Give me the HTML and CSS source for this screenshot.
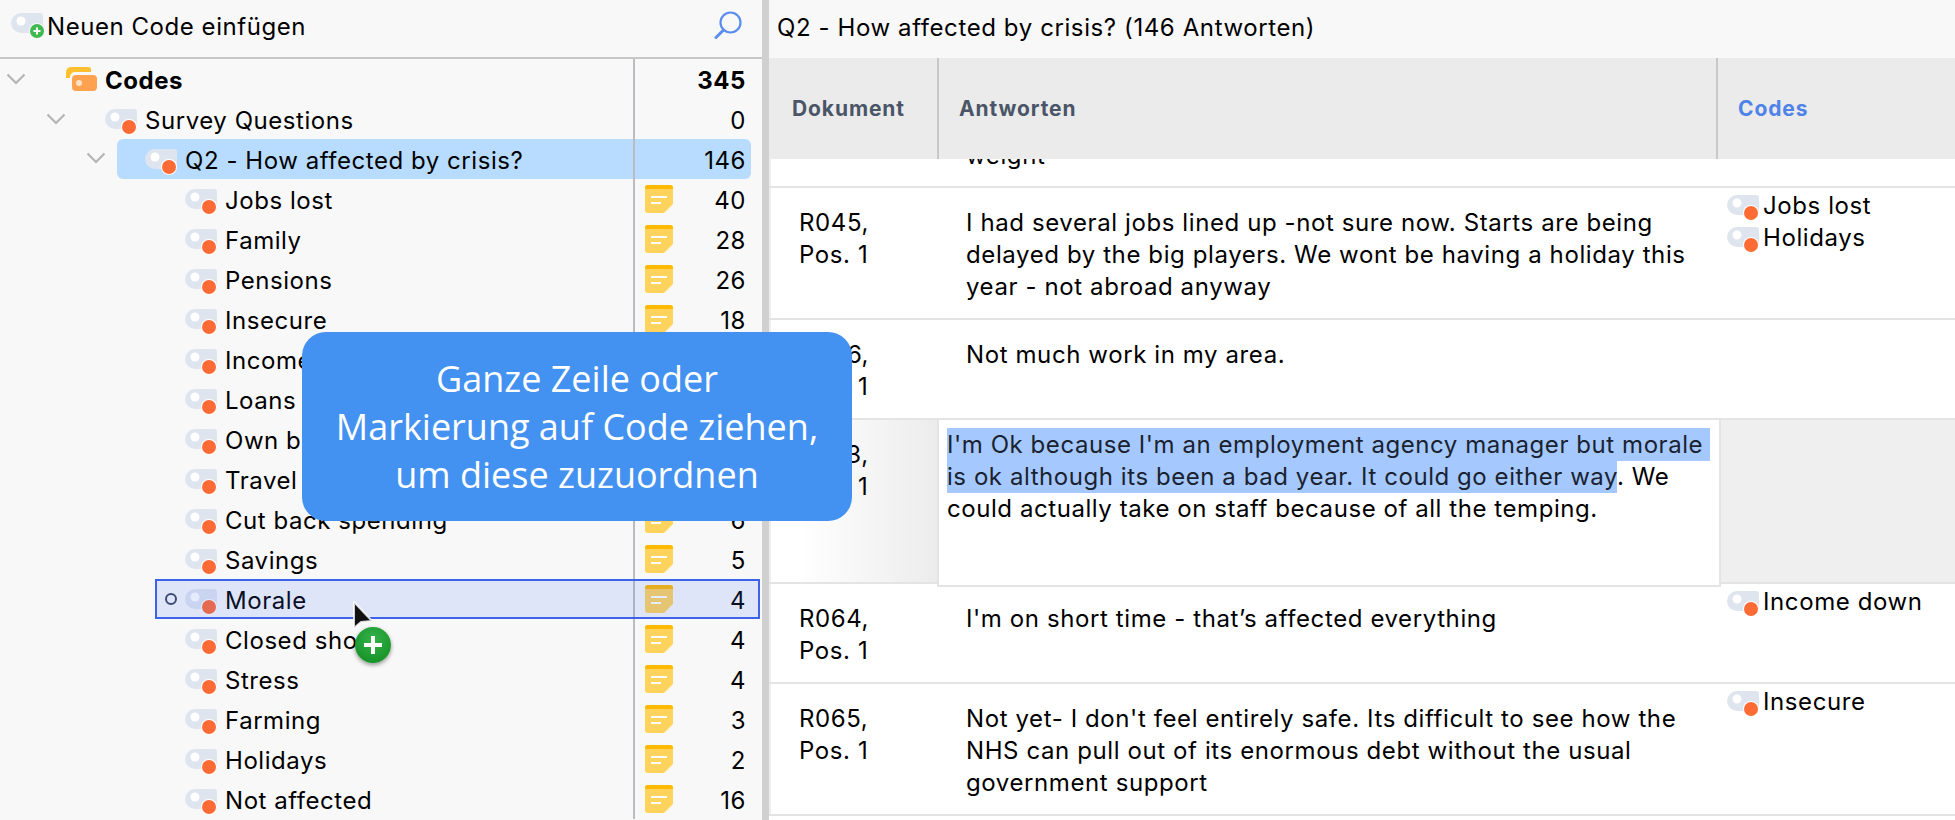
FILE: index.html
```html
<!DOCTYPE html>
<html lang="de">
  <head>
    <meta charset="UTF-8" />
    <title>Codes</title>
    <link rel="stylesheet" href="styles.css">
  </head>
  <body>
    <svg class="defs" width="0" height="0">
      <symbol id="tag" viewBox="0 0 32 32">
        <path d="M10 6h19a3 3 0 0 1 3 3v14a3 3 0 0 1-3 3H10a10 10 0 0 1 0-20z" fill="#dfe5ef" />
        <circle cx="10" cy="14" r="4.500" fill="#fff" />
        <circle cx="24" cy="24" r="8" fill="#fff" />
        <circle cx="24" cy="24" r="7" fill="#ff6b35" />
      </symbol>
      <symbol id="tag-plain" viewBox="0 0 32 32">
        <path d="M10 6h19a3 3 0 0 1 3 3v14a3 3 0 0 1-3 3H10a10 10 0 0 1 0-20z" fill="#dfe5ef" />
        <circle cx="10" cy="14" r="4.500" fill="#fff" />
      </symbol>
      <symbol id="memo" viewBox="0 0 28 28">
        <path d="M3 0h22a3 3 0 0 1 3 3v16l-9 9H3a3 3 0 0 1-3-3V3a3 3 0 0 1 3-3z" fill="#ffd35c" />
        <path d="M3 0h22a3 3 0 0 1 3 3v1H0V3a3 3 0 0 1 3-3z" fill="#ffb900" />
        <path d="M6 11h16v2H6zM6 17h10v2H6z" fill="#fff" />
      </symbol>
      <symbol id="chevron" viewBox="0 0 20 12">
        <path d="M1.500 1.500L10 10l8.500-8.500" fill="none" stroke="#b4b4b4" stroke-width="2.200" />
      </symbol>
    </svg>

    <div class="app">
      <div class="left-panel">
        <div class="toolbar">
          <span class="new-code">
            <svg class="icon-tag" width="32" height="32"><use href="#tag-plain" /></svg>
            <span class="add-dot">
              <svg width="14" height="14" viewBox="0 0 14 14"><circle cx="7" cy="7" r="7" fill="#3fb950" /><path d="M7 3.500v7M3.500 7h7" stroke="#fff" stroke-width="2" /></svg>
            </span>
            Neuen Code einfügen
          </span>
          <svg class="search" width="32" height="30" viewBox="0 0 32 30">
            <circle cx="17.500" cy="13.500" r="10" fill="none" stroke="#5b8def" stroke-width="2.200" />
            <path d="M10.500 21L3 28.500" stroke="#5b8def" stroke-width="3" stroke-linecap="round" />
          </svg>
        </div>

        <div class="tree">
          <div class="row root">
            <svg class="chevron lvl0" width="20" height="12"><use href="#chevron" /></svg>
            <svg class="icon-root" width="33" height="26" viewBox="0 0 33 26">
              <path d="M1 12V6a5 5 0 0 1 5-5h17a3 3 0 0 1 3 3v2H10a5 5 0 0 0-5 5v1z" fill="#ffbf2e" />
              <rect x="7" y="9" width="25" height="16" rx="4" fill="#ffa24f" />
              <circle cx="14" cy="17" r="3" fill="#ffe3c9" />
            </svg>
            <span class="label">Codes</span>
            <span class="memo-col"></span>
            <span class="num">345</span>
          </div>
          <div class="row">
            <svg class="chevron lvl1" width="20" height="12"><use href="#chevron" /></svg>
            <svg class="icon-tag" width="32" height="32"><use href="#tag" /></svg>
            <span class="label">Survey Questions</span>
            <span class="memo-col"></span>
            <span class="num">0</span>
          </div>
          <div class="row selected">
            <svg class="chevron lvl2" width="20" height="12"><use href="#chevron" /></svg>
            <svg class="icon-tag" width="32" height="32"><use href="#tag" /></svg>
            <span class="label">Q2 - How affected by crisis?</span>
            <span class="memo-col"></span>
            <span class="num">146</span>
          </div>
          <div class="row child">
            <svg class="icon-tag" width="32" height="32"><use href="#tag" /></svg>
            <span class="label">Jobs lost</span>
            <span class="memo-col"><svg width="28" height="28"><use href="#memo" /></svg></span>
            <span class="num">40</span>
          </div>
          <div class="row child">
            <svg class="icon-tag" width="32" height="32"><use href="#tag" /></svg>
            <span class="label">Family</span>
            <span class="memo-col"><svg width="28" height="28"><use href="#memo" /></svg></span>
            <span class="num">28</span>
          </div>
          <div class="row child">
            <svg class="icon-tag" width="32" height="32"><use href="#tag" /></svg>
            <span class="label">Pensions</span>
            <span class="memo-col"><svg width="28" height="28"><use href="#memo" /></svg></span>
            <span class="num">26</span>
          </div>
          <div class="row child">
            <svg class="icon-tag" width="32" height="32"><use href="#tag" /></svg>
            <span class="label">Insecure</span>
            <span class="memo-col"><svg width="28" height="28"><use href="#memo" /></svg></span>
            <span class="num">18</span>
          </div>
          <div class="row child">
            <svg class="icon-tag" width="32" height="32"><use href="#tag" /></svg>
            <span class="label">Income down</span>
            <span class="memo-col"><svg width="28" height="28"><use href="#memo" /></svg></span>
            <span class="num">12</span>
          </div>
          <div class="row child">
            <svg class="icon-tag" width="32" height="32"><use href="#tag" /></svg>
            <span class="label">Loans</span>
            <span class="memo-col"><svg width="28" height="28"><use href="#memo" /></svg></span>
            <span class="num">9</span>
          </div>
          <div class="row child">
            <svg class="icon-tag" width="32" height="32"><use href="#tag" /></svg>
            <span class="label">Own business</span>
            <span class="memo-col"><svg width="28" height="28"><use href="#memo" /></svg></span>
            <span class="num">8</span>
          </div>
          <div class="row child">
            <svg class="icon-tag" width="32" height="32"><use href="#tag" /></svg>
            <span class="label">Travel</span>
            <span class="memo-col"><svg width="28" height="28"><use href="#memo" /></svg></span>
            <span class="num">7</span>
          </div>
          <div class="row child">
            <svg class="icon-tag" width="32" height="32"><use href="#tag" /></svg>
            <span class="label">Cut back spending</span>
            <span class="memo-col"><svg width="28" height="28"><use href="#memo" /></svg></span>
            <span class="num">6</span>
          </div>
          <div class="row child">
            <svg class="icon-tag" width="32" height="32"><use href="#tag" /></svg>
            <span class="label">Savings</span>
            <span class="memo-col"><svg width="28" height="28"><use href="#memo" /></svg></span>
            <span class="num">5</span>
          </div>
          <div class="row child drop">
            <span class="ring"></span>
            <svg class="icon-tag" width="32" height="32"><use href="#tag" /></svg>
            <span class="label">Morale</span>
            <span class="memo-col"><svg width="28" height="28"><use href="#memo" /></svg></span>
            <span class="num">4</span>
          </div>
          <div class="row child">
            <svg class="icon-tag" width="32" height="32"><use href="#tag" /></svg>
            <span class="label">Closed shops</span>
            <span class="memo-col"><svg width="28" height="28"><use href="#memo" /></svg></span>
            <span class="num">4</span>
          </div>
          <div class="row child">
            <svg class="icon-tag" width="32" height="32"><use href="#tag" /></svg>
            <span class="label">Stress</span>
            <span class="memo-col"><svg width="28" height="28"><use href="#memo" /></svg></span>
            <span class="num">4</span>
          </div>
          <div class="row child">
            <svg class="icon-tag" width="32" height="32"><use href="#tag" /></svg>
            <span class="label">Farming</span>
            <span class="memo-col"><svg width="28" height="28"><use href="#memo" /></svg></span>
            <span class="num">3</span>
          </div>
          <div class="row child">
            <svg class="icon-tag" width="32" height="32"><use href="#tag" /></svg>
            <span class="label">Holidays</span>
            <span class="memo-col"><svg width="28" height="28"><use href="#memo" /></svg></span>
            <span class="num">2</span>
          </div>
          <div class="row child">
            <svg class="icon-tag" width="32" height="32"><use href="#tag" /></svg>
            <span class="label">Not affected</span>
            <span class="memo-col"><svg width="28" height="28"><use href="#memo" /></svg></span>
            <span class="num">16</span>
          </div>
        </div>
      </div>

      <div class="right-panel">
        <div class="title-bar">Q2 - How affected by crisis? (146 Antworten)</div>
        <div class="table-head">
          <div class="col-doc">Dokument</div>
          <div class="col-text">Antworten</div>
          <div class="col-codes active">Codes</div>
        </div>
        <div class="table-row cut">
          <div class="col-doc"></div>
          <div class="col-text">weight</div>
          <div class="col-codes"></div>
        </div>
        <div class="table-row tall">
          <div class="col-doc">R045,<br>Pos. 1</div>
          <div class="col-text">I had several jobs lined up -not sure now. Starts are being delayed by the big players. We wont be having a holiday this year - not abroad anyway</div>
          <div class="col-codes">
            <div class="code"><svg class="icon-tag" width="32" height="32"><use href="#tag" /></svg>Jobs lost</div>
            <div class="code"><svg class="icon-tag" width="32" height="32"><use href="#tag" /></svg>Holidays</div>
          </div>
        </div>
        <div class="table-row short">
          <div class="col-doc">R046,<br>Pos. 1</div>
          <div class="col-text">Not much work in my area.</div>
          <div class="col-codes"></div>
        </div>
        <div class="table-row editing">
          <div class="col-doc">R063,<br>Pos. 1</div>
          <div class="col-text"><mark>I'm Ok because I'm an employment agency manager but morale is ok although its been a bad year. It could go either way</mark>. We could actually take on staff because of all the temping.</div>
          <div class="col-codes"></div>
        </div>
        <div class="table-row short">
          <div class="col-doc">R064,<br>Pos. 1</div>
          <div class="col-text">I'm on short time - that’s affected everything</div>
          <div class="col-codes">
            <div class="code"><svg class="icon-tag" width="32" height="32"><use href="#tag" /></svg>Income down</div>
          </div>
        </div>
        <div class="table-row tall">
          <div class="col-doc">R065,<br>Pos. 1</div>
          <div class="col-text">Not yet- I don't feel entirely safe. Its difficult to see how the NHS can pull out of its enormous debt without the usual government support</div>
          <div class="col-codes">
            <div class="code"><svg class="icon-tag" width="32" height="32"><use href="#tag" /></svg>Insecure</div>
          </div>
        </div>
      </div>
    </div>

    <div class="hint">Ganze Zeile oder<br>Markierung auf Code ziehen,<br>um diese zuzuordnen</div>

    <svg class="pointer" width="24" height="36" viewBox="0 0 24 36">
      <path d="M2 2v26l7-6 11-1z" fill="#111" stroke="rgba(255,255,255,0.8)" stroke-width="2" stroke-linejoin="round" />
    </svg>
    <span class="copy-badge"></span>
  </body>
</html>
```

FILE: styles.css
```css
* {
  box-sizing: border-box;
}

html,
body {
  height: 100%;
}

body {
  margin: 0;
  overflow: hidden;
  background-color: #fff;
  color: #000;
  font-family: "Inter", "Liberation Sans", sans-serif;
  font-size: 24px;
  letter-spacing: 0.55px;
  position: relative;
}

.defs {
  position: absolute;
}

.app {
  display: flex;
  height: 820px;
}

svg {
  flex-shrink: 0;
  display: block;
}

/* Left panel */
.left-panel {
  width: 762px;
  background-color: #f8f8f8;
  overflow: hidden;
}

.toolbar {
  height: 59px;
  border-bottom: 2px solid #c8c8c8;
  display: flex;
  align-items: center;
  justify-content: space-between;
  padding: 0 17px 4px 11px;
}

.new-code {
  display: flex;
  align-items: center;
  position: relative;
}

.new-code .icon-tag {
  margin: -7px 4px 0 0;
}

.add-dot {
  position: absolute;
  left: 18px;
  top: 11px;
  width: 16px;
  height: 16px;
  background: #f8f8f8;
  border-radius: 50%;
  padding: 1px;
}

.search {
  align-self: flex-start;
  margin-top: 9px;
}

.row {
  height: 40px;
  display: flex;
  align-items: center;
  position: relative;
  padding: 2px 16px 0 0;
}

.row .icon-tag {
  margin-right: 8px;
  margin-top: -2px;
}

.row.root {
  font-weight: 700;
}

.root .icon-root {
  margin: -2px 7px 0 39px;
}

.chevron {
  margin-top: -2px;
}

.chevron.lvl0 {
  margin-left: 6px;
}

.chevron.lvl1 {
  margin: -2px 39px 0 46px;
}

.row.selected {
  margin: 0 11px 0 117px;
  padding-left: 28px;
  padding-right: 5px;
  background-color: #b8dcff;
  border-radius: 6px;
}

.chevron.lvl2 {
  position: absolute;
  left: -31px;
  top: 13px;
  margin: 0;
}

.row.child {
  padding-left: 185px;
}

.label {
  flex: 1;
  white-space: nowrap;
  overflow: hidden;
}

.memo-col {
  width: 113px;
  margin-top: -2px;
  align-self: stretch;
  height: 40px;
  flex-shrink: 0;
  display: flex;
  align-items: center;
  padding-left: 10px;
  border-left: 2px solid #bcbcc0;
}

.num {
  width: 0;
  flex: 0 0 0;
  display: flex;
  justify-content: flex-end;
}

.row.drop {
  margin: 0 2px 0 155px;
  padding-left: 30px;
  padding-right: 14px;
}

/* blue tint of the drop target lies over the icons as well */
.row.drop::after {
  content: "";
  position: absolute;
  inset: 0;
  background-color: rgba(70, 110, 245, 0.14);
  border: 2px solid #3d63e8;
}

.drop .ring {
  position: absolute;
  left: 10px;
  top: 14px;
  width: 12px;
  height: 12px;
  border: 2px solid #3b4660;
  border-radius: 50%;
}

/* Right panel */
.right-panel {
  flex: 1;
  border-left: 7px solid #d0d0d0;
  overflow: hidden;
  letter-spacing: 0.6px;
}

.title-bar {
  height: 58px;
  background-color: #f8f8f8;
  display: flex;
  align-items: center;
  padding: 0 0 4px 8px;
  white-space: nowrap;
}

.table-head {
  display: flex;
  height: 101px;
  background-color: #ebebeb;
  font-size: 21px;
  font-weight: 700;
  color: #4a5568;
  letter-spacing: 0.9px;
}

.table-head > div {
  display: flex;
  align-items: center;
  padding-left: 20px;
}

.table-head .col-doc {
  padding-left: 23px;
}

.table-head .col-text,
.table-head .col-codes {
  border-left: 2px solid #c8c8c8;
}

.table-head .active {
  color: #4f83e8;
}

.col-doc {
  width: 168px;
  flex-shrink: 0;
}

.col-text {
  width: 779px;
  flex-shrink: 0;
}

.col-codes {
  flex: 1;
}

.table-row {
  display: flex;
  border-bottom: 2px solid #e4e4e4;
  box-shadow: inset 2px 0 0 #eee;
  line-height: 32px;
}

.table-row .col-doc {
  padding: 19px 0 0 30px;
}

.table-row .col-text {
  padding: 19px 28px 0 29px;
}

.table-row .col-codes {
  padding: 2px 0 0 11px;
}

.table-row.cut {
  height: 29px;
  overflow: hidden;
}

.table-row.cut .col-text {
  padding-top: 0;
  margin-top: -19px;
}

.table-row.tall {
  height: 132px;
}

.table-row.short {
  height: 100px;
}

.table-row.editing {
  height: 164px;
  background: linear-gradient(to right, #fff 0, #fff 30px, #ececec 168px);
}

.table-row.editing .col-text {
  width: 784px;
  height: 169px;
  margin-top: -2px;
  background-color: #fff;
  border: 2px solid #e4e4e4;
  padding: 9px 6px 0 8px;
  letter-spacing: 0.56px;
  white-space: pre-wrap;
  position: relative;
}

.table-row.editing .col-codes {
  background-color: #efefef;
}

mark {
  background-color: #a5c9ff;
  color: #1a2230;
  padding: 2px 0;
}

.code {
  display: flex;
  align-items: center;
  height: 32px;
}

.code .icon-tag {
  margin: -2px 4px 0 0;
}

/* Things lying over the panels */
.hint {
  position: absolute;
  left: 302px;
  top: 332px;
  width: 550px;
  height: 189px;
  background-color: #4391f1;
  border-radius: 24px;
  color: #fff;
  font-family: "Open Sans", sans-serif;
  font-size: 36px;
  line-height: 48px;
  letter-spacing: 0;
  text-align: center;
  padding-top: 23px;
}

.pointer {
  position: absolute;
  left: 352px;
  top: 600px;
}

.copy-badge {
  position: absolute;
  left: 355px;
  top: 627px;
  width: 36px;
  height: 36px;
  border-radius: 50%;
  background: radial-gradient(circle at 50% 35%, #35b24a, #0e8a1e);
  box-shadow: 0 2px 4px rgba(0, 0, 0, 0.4);
}

.copy-badge::before,
.copy-badge::after {
  content: "";
  position: absolute;
  background: #fff;
}

.copy-badge::before {
  left: 9px;
  top: 16px;
  width: 18px;
  height: 4px;
}

.copy-badge::after {
  left: 16px;
  top: 9px;
  width: 4px;
  height: 18px;
}
```
